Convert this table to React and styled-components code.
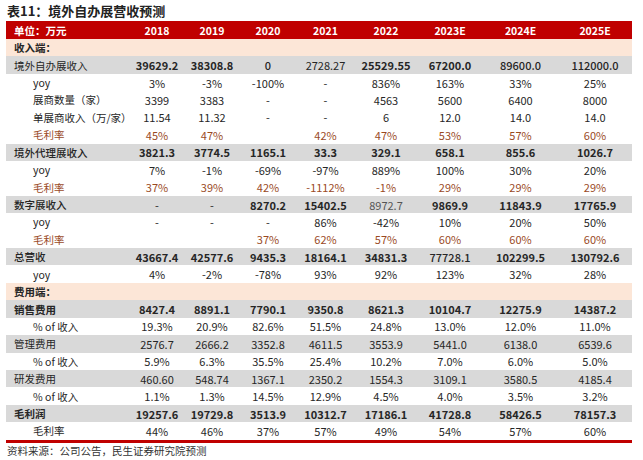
import React from "react";
import styled, { createGlobalStyle } from "styled-components";

const GlobalStyle = createGlobalStyle`
  html, body {
    margin: 0;
    padding: 0;
    background: #ffffff;
  }
  body {
    font-family: "Noto Sans CJK SC", "Noto Sans", sans-serif;
    color: #262626;
  }
`;

const COLS = "124px 54px 56px 56px 59px 62px 66px 75px 74px";
const RED = "#c00000";
const BROWN = "#9a4a1f";

const Page = styled.div`
  width: 643px;
  height: 460px;
  padding: 0 0 0 6px;
  box-sizing: border-box;
`;

const Title = styled.div`
  height: 21px;
  line-height: 22px;
  padding-left: 1px;
  font-size: 13px;
  font-weight: 700;
  color: #222;
`;

const Table = styled.div`
  width: 626px;
  border-bottom: 3px solid ${RED};
`;

const Row = styled.div`
  display: grid;
  grid-template-columns: ${COLS};
  height: ${(p) => (p.$head ? "18px" : "17.43px")};
  align-items: center;
  background: ${(p) =>
    p.$kind === "head"
      ? RED
      : p.$kind === "section"
      ? "#fce6d7"
      : p.$kind === "main"
      ? "#d9d9d9"
      : "#ffffff"};
  color: ${(p) => (p.$kind === "head" ? "#ffffff" : "#262626")};
`;

const Label = styled.div`
  font-size: 10.5px;
  white-space: nowrap;
  padding-left: ${(p) => (p.$indent ? "27px" : "8px")};
  font-weight: ${(p) => p.$weight || 400};
  color: ${(p) => p.$color || "inherit"};
`;

const Cell = styled.div`
  font-size: 11px;
  text-align: center;
  white-space: nowrap;
  font-weight: ${(p) => p.$weight || 400};
  color: ${(p) => p.$color || "inherit"};
`;

const HeadCell = styled(Cell)`
  font-size: 10.5px;
`;

const Source = styled.div`
  margin-top: 1px;
  padding-left: 1px;
  font-size: 10.5px;
  line-height: 14px;
  color: #333;
`;

const years = ["2018", "2019", "2020", "2021", "2022", "2023E", "2024E", "2025E"];

// b = bold, m = semi, n = normal, g = normal gray
const rows = [
  { kind: "section", label: "收入端：", lw: 700 },
  {
    kind: "main",
    label: "境外自办展收入",
    vals: ["39629.2", "38308.8", "0", "2728.27", "25529.55", "67200.0", "89600.0", "112000.0"],
    w: ["b", "b", "m", "n", "b", "b", "m", "m"],
  },
  { kind: "sub", label: "yoy", vals: ["3%", "-3%", "-100%", "-", "836%", "163%", "33%", "25%"] },
  { kind: "sub", label: "展商数量（家）", vals: ["3399", "3383", "-", "-", "4563", "5600", "6400", "8000"] },
  { kind: "sub", label: "单展商收入（万/家）", vals: ["11.54", "11.32", "-", "-", "6", "12.0", "14.0", "14.0"] },
  { kind: "sub", brown: true, label: "毛利率", vals: ["45%", "47%", "", "42%", "47%", "53%", "57%", "60%"] },
  {
    kind: "main",
    label: "境外代理展收入",
    lw: 500,
    vals: ["3821.3", "3774.5", "1165.1", "33.3", "329.1", "658.1", "855.6", "1026.7"],
    w: ["b", "b", "b", "b", "b", "b", "b", "b"],
  },
  { kind: "sub", label: "yoy", vals: ["7%", "-1%", "-69%", "-97%", "889%", "100%", "30%", "20%"] },
  { kind: "sub", brown: true, label: "毛利率", vals: ["37%", "39%", "42%", "-1112%", "-1%", "29%", "29%", "29%"] },
  {
    kind: "main",
    label: "数字展收入",
    lw: 500,
    vals: ["-", "-", "8270.2", "15402.5", "8972.7", "9869.9", "11843.9", "17765.9"],
    w: ["n", "n", "b", "b", "g", "b", "b", "b"],
  },
  { kind: "sub", label: "yoy", vals: ["-", "-", "-", "86%", "-42%", "10%", "20%", "50%"] },
  { kind: "sub", brown: true, label: "毛利率", vals: ["", "", "37%", "62%", "57%", "60%", "60%", "60%"] },
  {
    kind: "main",
    label: "总营收",
    lw: 500,
    vals: ["43667.4", "42577.6", "9435.3", "18164.1", "34831.3", "77728.1", "102299.5", "130792.6"],
    w: ["b", "b", "b", "b", "b", "m", "b", "b"],
  },
  { kind: "sub", label: "yoy", vals: ["4%", "-2%", "-78%", "93%", "92%", "123%", "32%", "28%"] },
  { kind: "section", label: "费用端：", lw: 700 },
  {
    kind: "main",
    label: "销售费用",
    lw: 700,
    vals: ["8427.4", "8891.1", "7790.1", "9350.8", "8621.3", "10104.7", "12275.9", "14387.2"],
    w: ["b", "b", "b", "b", "b", "b", "b", "b"],
  },
  { kind: "sub", label: "% of 收入", vals: ["19.3%", "20.9%", "82.6%", "51.5%", "24.8%", "13.0%", "12.0%", "11.0%"] },
  {
    kind: "main",
    label: "管理费用",
    vals: ["2576.7", "2666.2", "3352.8", "4611.5", "3553.9", "5441.0", "6138.0", "6539.6"],
  },
  { kind: "sub", label: "% of 收入", vals: ["5.9%", "6.3%", "35.5%", "25.4%", "10.2%", "7.0%", "6.0%", "5.0%"] },
  {
    kind: "main",
    label: "研发费用",
    vals: ["460.60", "548.74", "1367.1", "2350.2", "1554.3", "3109.1", "3580.5", "4185.4"],
  },
  { kind: "sub", label: "% of 收入", vals: ["1.1%", "1.3%", "14.5%", "12.9%", "4.5%", "4.0%", "3.5%", "3.2%"] },
  {
    kind: "main",
    label: "毛利润",
    lw: 700,
    vals: ["19257.6", "19729.8", "3513.9", "10312.7", "17186.1", "41728.8", "58426.5", "78157.3"],
    w: ["b", "b", "b", "b", "b", "b", "b", "b"],
  },
  { kind: "sub", label: "毛利率", vals: ["44%", "46%", "37%", "57%", "49%", "54%", "57%", "60%"] },
];

const weightOf = (k) => (k === "b" ? 700 : k === "m" ? 500 : 400);

function App() {
  return (
    <Page>
      <GlobalStyle />
      <Title>表11：境外自办展营收预测</Title>
      <Table>
        <Row $kind="head" $head>
          <Label $weight={700}>单位：万元</Label>
          {years.map((y) => (
            <HeadCell key={y} $weight={700}>
              {y}
            </HeadCell>
          ))}
        </Row>
        {rows.map((r, i) => (
          <Row key={i} $kind={r.kind}>
            <Label
              $indent={r.kind === "sub"}
              $weight={r.lw}
              $color={r.brown ? BROWN : undefined}
            >
              {r.label}
            </Label>
            {(r.vals || []).map((v, j) => {
              const k = r.w ? r.w[j] : "n";
              return (
                <Cell
                  key={j}
                  $weight={weightOf(k)}
                  $color={r.brown ? BROWN : k === "g" ? "#555" : undefined}
                >
                  {v}
                </Cell>
              );
            })}
          </Row>
        ))}
      </Table>
      <Source>资料来源：公司公告，民生证券研究院预测</Source>
    </Page>
  );
}

export default App;
